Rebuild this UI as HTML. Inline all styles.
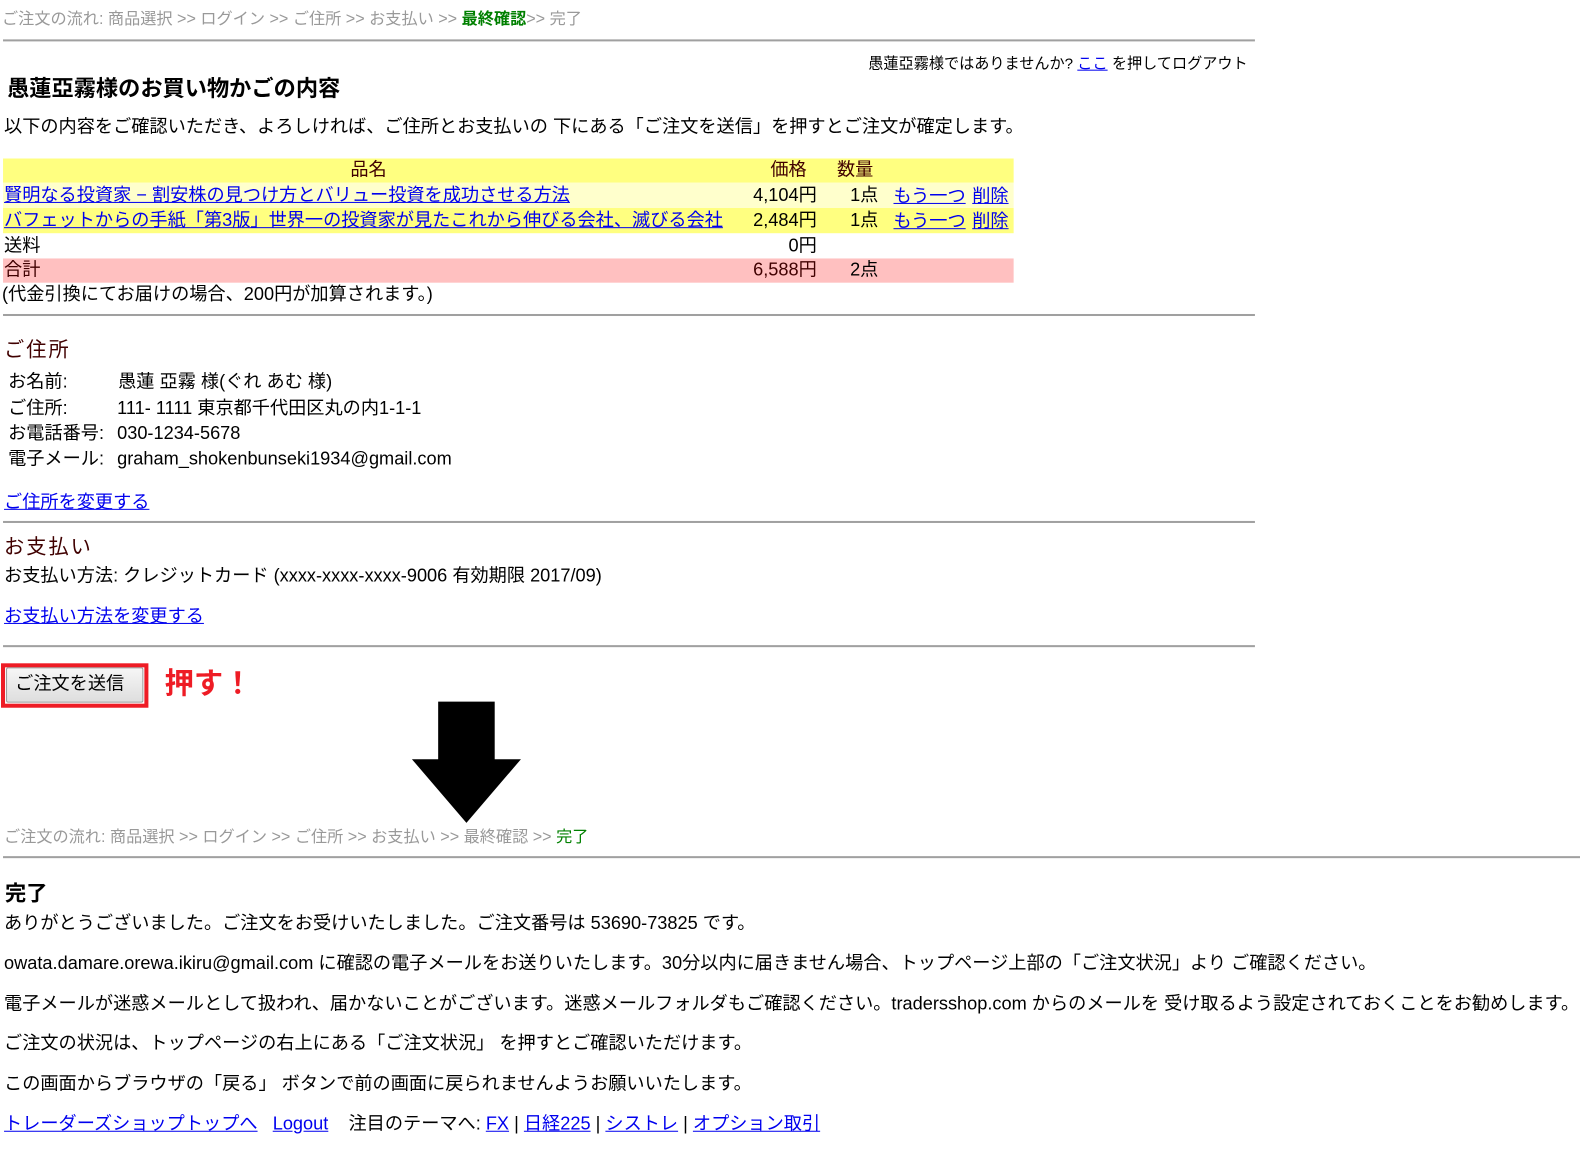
<!DOCTYPE html>
<html><head><meta charset="utf-8">
<style>
*{margin:0;padding:0;box-sizing:border-box}
body{width:1580px;height:1164px;background:#fff;position:relative;overflow:hidden;font-family:"Liberation Sans","Noto Sans CJK JP",sans-serif;color:#000;font-size:18px}
#w{position:absolute;left:0;top:0;width:1565px;height:1153px;transform:scale(1.0096);transform-origin:0 0}
.a{position:absolute;white-space:nowrap;line-height:1}
a{color:#0000ee;text-decoration:underline}
.bc{font-size:16px;color:#999}
.g{color:#008000;font-weight:bold}
.g2{color:#008000}
.hr{position:absolute;height:2px;background:#a0a0a0;left:3px}
.row{position:absolute;left:3px;width:1001px;height:25px}
.r{text-align:right}
</style></head><body><div id="w">

<div class="a bc" style="left:2px;top:12px">ご注文の流れ: 商品選択 &gt;&gt; ログイン &gt;&gt; ご住所 &gt;&gt; お支払い &gt;&gt; <span class="g">最終確認</span>&gt;&gt; 完了</div>
<div class="hr" style="top:39px;width:1240px"></div>

<div class="a" style="left:860px;top:56px;font-size:15px">愚蓮亞霧様ではありませんか? <a href="#">ここ</a> を押してログアウト</div>
<div class="a" style="left:7px;top:77px;font-size:22px;font-weight:bold">愚蓮亞霧様のお買い物かごの内容</div>
<div class="a" style="left:4px;top:116px">以下の内容をご確認いただき、よろしければ、ご住所とお支払いの 下にある「ご注文を送信」を押すとご注文が確定します。</div>

<div class="row" style="top:157px;height:24px;background:#ffff80"></div>
<div class="row" style="top:181px;background:#ffffcc"></div>
<div class="row" style="top:206px;background:#ffff80"></div>
<div class="row" style="top:256px;height:24px;background:#ffc0c0"></div>

<div class="a" style="left:347px;top:159px;color:#400000">品名</div>
<div class="a" style="left:763px;top:159px;color:#400000">価格</div>
<div class="a" style="left:829px;top:159px;color:#400000">数量</div>

<div class="a" style="left:4px;top:184px"><a href="#">賢明なる投資家 − 割安株の見つけ方とバリュー投資を成功させる方法</a></div>
<div class="a r" style="left:700px;width:109px;top:184px">4,104円</div>
<div class="a r" style="left:820px;width:50px;top:184px">1点</div>
<div class="a" style="left:885px;top:185px"><a href="#">もう一つ</a></div>
<div class="a" style="left:963px;top:185px"><a href="#">削除</a></div>

<div class="a" style="left:4px;top:209px"><a href="#">バフェットからの手紙「第3版」世界一の投資家が見たこれから伸びる会社、滅びる会社</a></div>
<div class="a r" style="left:700px;width:109px;top:209px">2,484円</div>
<div class="a r" style="left:820px;width:50px;top:209px">1点</div>
<div class="a" style="left:885px;top:210px"><a href="#">もう一つ</a></div>
<div class="a" style="left:963px;top:210px"><a href="#">削除</a></div>

<div class="a" style="left:4px;top:234px">送料</div>
<div class="a r" style="left:700px;width:109px;top:234px">0円</div>

<div class="a" style="left:4px;top:258px;color:#400000">合計</div>
<div class="a r" style="left:700px;width:109px;top:258px;color:#400000">6,588円</div>
<div class="a r" style="left:820px;width:50px;top:258px">2点</div>

<div class="a" style="left:2px;top:282px">(代金引換にてお届けの場合、200円が加算されます。)</div>
<div class="hr" style="top:311px;width:1240px"></div>

<div class="a" style="left:4px;top:337px;font-size:20px;color:#400000;letter-spacing:2px">ご住所</div>
<div class="a" style="left:8px;top:369px">お名前:</div><div class="a" style="left:117px;top:369px">愚蓮 亞霧 様(ぐれ あむ 様)</div>
<div class="a" style="left:8px;top:395px">ご住所:</div><div class="a" style="left:116px;top:395px">111- 1111 東京都千代田区丸の内1-1-1</div>
<div class="a" style="left:8px;top:420px">お電話番号:</div><div class="a" style="left:116px;top:420px">030-1234-5678</div>
<div class="a" style="left:8px;top:445px">電子メール:</div><div class="a" style="left:116px;top:445px">graham_shokenbunseki1934@gmail.com</div>
<div class="a" style="left:4px;top:488px"><a href="#">ご住所を変更する</a></div>
<div class="hr" style="top:516px;width:1240px"></div>

<div class="a" style="left:4px;top:532px;font-size:20px;color:#400000;letter-spacing:2px">お支払い</div>
<div class="a" style="left:4px;top:561px">お支払い方法: クレジットカード (xxxx-xxxx-xxxx-9006 有効期限 2017/09)</div>
<div class="a" style="left:4px;top:601px"><a href="#">お支払い方法を変更する</a></div>
<div class="hr" style="top:639px;width:1240px"></div>

<div style="position:absolute;left:1px;top:657px;width:146px;height:44px;border:4px solid #ee1c25"></div>
<div style="position:absolute;left:6px;top:661px;width:136px;height:35px;border:1px solid #999;border-radius:2px;background:linear-gradient(#f6f6f6,#dedede)"></div>
<div class="a" style="left:15px;top:668px">ご注文を送信</div>
<div class="a" style="left:163px;top:664px;font-size:29px;font-weight:bold;color:#ee1c25">押す！</div>

<svg style="position:absolute;left:0;top:0" width="1565" height="1153"><polygon points="434,695 490,695 490,752 516,752 462,815 408,752 434,752" fill="#000"/></svg>

<div class="a bc" style="left:4px;top:822px">ご注文の流れ: 商品選択 &gt;&gt; ログイン &gt;&gt; ご住所 &gt;&gt; お支払い &gt;&gt; 最終確認 &gt;&gt; <span class="g2">完了</span></div>
<div class="hr" style="top:848px;width:1574px"></div>

<div class="a" style="left:5px;top:875px;font-size:21px;font-weight:bold">完了</div>
<div class="a" style="left:4px;top:905px">ありがとうございました。ご注文をお受けいたしました。ご注文番号は 53690-73825 です。</div>
<div class="a" style="left:4px;top:945px">owata.damare.orewa.ikiru@gmail.com に確認の電子メールをお送りいたします。30分以内に届きません場合、トップページ上部の「ご注文状況」より ご確認ください。</div>
<div class="a" style="left:4px;top:985px">電子メールが迷惑メールとして扱われ、届かないことがございます。迷惑メールフォルダもご確認ください。tradersshop.com からのメールを 受け取るよう設定されておくことをお勧めします。</div>
<div class="a" style="left:4px;top:1024px">ご注文の状況は、トップページの右上にある「ご注文状況」 を押すとご確認いただけます。</div>
<div class="a" style="left:4px;top:1064px">この画面からブラウザの「戻る」 ボタンで前の画面に戻られませんようお願いいたします。</div>
<div class="a" style="left:4px;top:1104px"><a href="#">トレーダーズショップトップへ</a>&nbsp;&nbsp; <a href="#">Logout</a> &nbsp;&nbsp; 注目のテーマへ: <a href="#">FX</a> | <a href="#">日経225</a> | <a href="#">シストレ</a> | <a href="#">オプション取引</a></div>

</div></body></html>
